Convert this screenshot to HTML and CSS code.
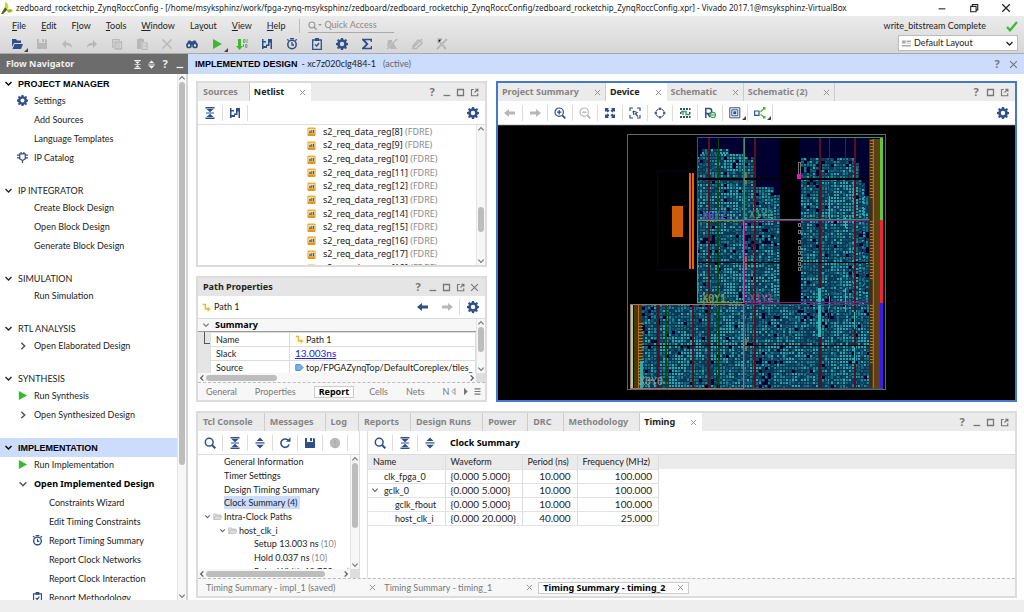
FILE: index.html
```html
<!DOCTYPE html>
<html lang="en">
<head>
<meta charset="utf-8">
<meta name="viewport" content="width=device-width, initial-scale=1">
<title>zedboard_rocketchip_ZynqRoccConfig - Vivado 2017.1</title>
<link rel="stylesheet" href="styles.css">
</head>
<body>
<svg class="sprite" aria-hidden="true">
  <symbol id="gear" viewBox="0 0 12 12"><path fill="currentColor" fill-rule="evenodd" d="M5 0h2l.4 1.6 1 .4L9.800 1.100l1.200 1.200L10.100 3.700l.4 1 1.500.4v2l-1.500.4-.4 1 .8 1.400-1.300 1.200L8.400 10.200l-1 .4L7 12H5l-.4-1.400-1-.4-1.400.9L1 9.900l.9-1.400-.4-1L0 7V5l1.500-.3.4-1L1 2.200 2.300 1l1.300.9 1-.4zM6 3.800a2.200 2.200 0 1 0 0 4.400 2.200 2.200 0 0 0 0-4.400z"/></symbol>
  <symbol id="open" viewBox="0 0 12 12"><path fill="currentColor" d="M1 1h4l1 1.500h4V5H3L1 9zM3.500 6H12l-2 5H1.500z"/></symbol>
  <symbol id="save" viewBox="0 0 12 12"><path fill="currentColor" d="M1 1h2v4h6V1h1l1 1v9H1zM6 1h2v3H6z"/></symbol>
  <symbol id="undo" viewBox="0 0 12 12"><path fill="currentColor" d="M1 6l4-4v2.700c4 0 6 1.500 6 5-1.500-2-3-2.400-6-2.400V10z"/></symbol>
  <symbol id="redo" viewBox="0 0 12 12"><path fill="currentColor" d="M11 6L7 2v2.700c-4 0-6 1.500-6 5 1.500-2 3-2.400 6-2.400V10z"/></symbol>
  <symbol id="copy" viewBox="0 0 12 12"><path fill="none" stroke="currentColor" stroke-width="1.300" d="M3 9H1.700V1.700H8V3M4 4h6.500v7H4z"/><path stroke="currentColor" d="M5 6h4M5 8h4M5 10h4"/></symbol>
  <symbol id="paste" viewBox="0 0 12 12"><path fill="currentColor" d="M1 1h2.500V0h2v1H8v3H5v7H1z"/><path fill="none" stroke="currentColor" stroke-width="1.200" d="M6 5h5v6.300H6zM7 8h3"/></symbol>
  <symbol id="cross" viewBox="0 0 12 12"><path fill="none" stroke="currentColor" stroke-width="1.500" d="M1.500 1.500l9 9M10.500 1.500l-9 9"/></symbol>
  <symbol id="find" viewBox="0 0 12 12"><path fill="currentColor" d="M2.500 2.500h2l1 1h1l1-1h2L12 7H0z"/><circle cx="3" cy="7.500" r="2" fill="#eee" stroke="currentColor" stroke-width="1.700"/><circle cx="9" cy="7.500" r="2" fill="#eee" stroke="currentColor" stroke-width="1.700"/></symbol>
  <symbol id="play" viewBox="0 0 12 12"><path fill="#3db92d" d="M2 1l9 5-9 5z"/></symbol>
  <symbol id="bits" viewBox="0 0 12 12"><path fill="#3db92d" d="M2 1h3v7h2l-3.500 4L0 8h2z"/><path fill="none" stroke="#77a777" d="M7.500 1.500h1.500v3H7.500zM11 1v4M7.500 6v3M9.500 6.500H11v3H9.500z"/></symbol>
  <symbol id="schem" viewBox="0 0 12 12"><path fill="currentColor" d="M1 1h1.500v2H5v1.500H2.500V8H5V6.500h2V1h4v10H9.500V4.500h-1V8H6v2H2.500v1H1z"/></symbol>
  <symbol id="timer" viewBox="0 0 12 12"><circle cx="6" cy="6.500" r="4.200" fill="none" stroke="currentColor" stroke-width="1.500"/><path fill="none" stroke="currentColor" stroke-width="1.300" d="M4 .7h4M6 4v3h2M1 1.500l2 1M11 1.500l-2 1"/></symbol>
  <symbol id="clip" viewBox="0 0 12 12"><path fill="none" stroke="currentColor" stroke-width="1.300" d="M1.700 2h8.600v9.300H1.700zM4 6.500L5.700 8 8 5"/><path fill="currentColor" d="M4 0h4v3H4z"/></symbol>
  <symbol id="sigma" viewBox="0 0 12 12"><path fill="currentColor" d="M1 .7h10v3H9.700l-.5-1.500H4.200L7.500 6l-3.500 3.700h5.500l.5-1.600H11v3.200H1V10l4-4-4-4z"/></symbol>
  <symbol id="unmark" viewBox="0 0 12 12"><path fill="currentColor" d="M2 2h4v2l2-1v3l3 5H5L1 9z"/><path stroke="#e4e4e4" stroke-width="1" d="M11 0L1 10"/><path stroke="currentColor" stroke-width="1.500" d="M11 1L1 11"/></symbol>
  <symbol id="clipx" viewBox="0 0 12 12"><path fill="none" stroke="currentColor" stroke-width="1.500" d="M2 8l5-6 3 1 1 2-6 6-3-1zM1 11L11 1M4 8l4-4"/></symbol>
  <symbol id="delx" viewBox="0 0 12 12"><path fill="none" stroke="currentColor" stroke-width="2" d="M2 2l8 9M11 1L1 11"/><path stroke="currentColor" stroke-width="1.500" d="M2 5V1h4"/></symbol>
  <symbol id="search" viewBox="0 0 12 12"><circle cx="5.200" cy="5.200" r="3.900" fill="none" stroke="currentColor" stroke-width="1.500"/><path stroke="currentColor" stroke-width="2" d="M8 8l3.300 3.300"/></symbol>
  <symbol id="collapse" viewBox="0 0 12 12"><path fill="currentColor" d="M1.500 0h9v1.400h-9zM1.500 10.600h9V12h-9zM2.500 2h7L6 5.200zM2.500 10h7L6 6.800z"/><path stroke="currentColor" d="M2 6h8"/></symbol>
  <symbol id="expand" viewBox="0 0 12 12"><path fill="currentColor" d="M6 .5L9.500 4h-7zM6 11.500L9.500 8h-7zM1.500 5h9v.8h-9zM1.500 6.400h9v.8h-9z"/></symbol>
  <symbol id="reload" viewBox="0 0 12 12"><path fill="none" stroke="currentColor" stroke-width="1.600" d="M9 3.100A4.200 4.200 0 1 0 10.100 7.500"/><path fill="currentColor" d="M7 4.800h4.500V.3z"/></symbol>
  <symbol id="dot" viewBox="0 0 12 12"><circle cx="6" cy="6" r="5.200" fill="#b9b9b9"/><path stroke="#aaa" stroke-width="1.500" d="M6 3v4M6 8v1.500"/></symbol>
  <symbol id="left" viewBox="0 0 12 12"><path fill="currentColor" d="M0 6l5-4v2.400h6v3.200H5V10z"/></symbol>
  <symbol id="right" viewBox="0 0 12 12"><path fill="currentColor" d="M12 6L7 2v2.400H1v3.200h6V10z"/></symbol>
  <symbol id="zin" viewBox="0 0 12 12"><circle cx="5.200" cy="5.200" r="4.200" fill="none" stroke="currentColor" stroke-width="1.200"/><path stroke="currentColor" stroke-width="1.800" d="M8.300 8.300l3 3"/><path stroke="currentColor" stroke-width="1.300" d="M3 5.200h4.400M5.200 3v4.400"/></symbol>
  <symbol id="zout" viewBox="0 0 12 12"><circle cx="5.200" cy="5.200" r="4.200" fill="none" stroke="currentColor" stroke-width="1.200"/><path stroke="currentColor" stroke-width="1.800" d="M8.300 8.300l3 3"/><path stroke="currentColor" stroke-width="1.300" d="M3 5.200h4.400"/></symbol>
  <symbol id="fit" viewBox="0 0 12 12"><path fill="currentColor" d="M1 1h4L3.900 2.100l1.600 1.600-1.800 1.800-1.600-1.600L1 5zM11 1v4L9.900 3.900 8.300 5.500 6.500 3.700l1.600-1.600L7 1zM1 11V7l1.100 1.100 1.600-1.600 1.800 1.800-1.600 1.600L5 11zM11 11H7l1.100-1.100-1.600-1.600 1.800-1.800 1.600 1.600L11 7z"/></symbol>
  <symbol id="zsel" viewBox="0 0 12 12"><path fill="none" stroke="currentColor" stroke-width="1.200" d="M1 4V1h3M8 1h3v3M11 8v3H8M4 11H1V8M4 4l4 1.500L6.500 7 9 9.500M4 4l1 4"/></symbol>
  <symbol id="target" viewBox="0 0 12 12"><circle cx="6" cy="6" r="4.200" fill="none" stroke="currentColor" stroke-width="1"/><path stroke="currentColor" stroke-width="1.500" d="M6 .5v2.500M6 9v2.500M.5 6h2.500M9 6h2.500"/></symbol>
  <symbol id="route" viewBox="0 0 12 12"><path fill="currentColor" d="M1 1h2v2H1zM4 1h2v2H4zM7 1h2v2H7zM10 1h1.500v2H10zM1 9h2v2H1zM4 9h2v2H4zM7 9h2v2H7zM10 9h1.500v2H10zM10 5h1.500v2H10zM1 5h1.500v2H1z"/><path fill="none" stroke="#3da04a" stroke-width="1.400" d="M2 4.500h5v3h4M4 8V5"/></symbol>
  <symbol id="pplus" viewBox="0 0 12 12"><path fill="none" stroke="currentColor" stroke-width="1.500" d="M1.800 11V1.500h3.400a2.500 2.500 0 0 1 0 5H2M4 7l2 3"/><circle cx="8.800" cy="8" r="2.700" fill="none" stroke="#3da04a" stroke-width="1.200"/><path stroke="#3da04a" stroke-width="1.200" d="M7 8h3.600"/></symbol>
  <symbol id="layers" viewBox="0 0 12 12"><path fill="none" stroke="currentColor" d="M.8.800h10v10H.800zM2.800 2.800h6v6h-6z"/><path fill="currentColor" d="M4.300 4.300h3v3h-3z"/></symbol>
  <symbol id="conn" viewBox="0 0 12 12"><path fill="none" stroke="currentColor" stroke-width="1.200" d="M.7 4h4.300v4.300H.700z"/><path fill="#3db92d" d="M9 0h2.500v2.500H9zM9 9h2.500v2.500H9z"/><path fill="none" stroke="#3db92d" stroke-width="1.200" d="M6.500 5L10 1.500M6.500 7.500L10 10"/></symbol>
  <symbol id="ip" viewBox="0 0 12 12"><path fill="none" stroke="currentColor" stroke-width="1.300" d="M3 2h6v5.500L6.500 9h-1L3 7.500zM0 3.500h3M0 6.500h3M9 3.500h3M9 6.500h3M6 9v3M4.500 0v2M7.500 0v2"/></symbol>
  <symbol id="down" viewBox="0 0 12 12"><path fill="none" stroke="currentColor" stroke-width="1.800" d="M2 4l4 4 4-4"/></symbol>
  <symbol id="up" viewBox="0 0 12 12"><path fill="none" stroke="currentColor" stroke-width="1.800" d="M2 8l4-4 4 4"/></symbol>
  <symbol id="next" viewBox="0 0 12 12"><path fill="none" stroke="currentColor" stroke-width="1.800" d="M4 2l4 4-4 4"/></symbol>
  <symbol id="prev" viewBox="0 0 12 12"><path fill="none" stroke="currentColor" stroke-width="1.800" d="M8 2L4 6l4 4"/></symbol>
  <symbol id="min" viewBox="0 0 12 12"><path stroke="currentColor" stroke-width="1.700" d="M2 10h9"/></symbol>
  <symbol id="dash" viewBox="0 0 12 12"><path stroke="currentColor" stroke-width="1.300" d="M2 7h8"/></symbol>
  <symbol id="max" viewBox="0 0 12 12"><path fill="none" stroke="currentColor" stroke-width="1.700" d="M2 2h8v8H2z"/></symbol>
  <symbol id="pop" viewBox="0 0 12 12"><path fill="none" stroke="currentColor" stroke-width="1.500" d="M5 2H2v8.300h8.300V7M6 6l4-4M7 1.700h3.500V5"/></symbol>
  <symbol id="cell" viewBox="0 0 12 12"><rect x=".5" y=".5" width="11" height="11" rx="1.500" fill="#f5ae2b"/><path fill="#fff0c8" d="M2 3h8v5H2z"/><path fill="#35599a" d="M3 5h2v3H3zM5.500 4h1v4h-1zM7.500 4h2v4h-2z"/><path fill="#d07d10" d="M1 10h10v1.500H1z"/></symbol>
  <symbol id="path" viewBox="0 0 12 12"><path fill="none" stroke="#e9b92a" stroke-width="2" d="M1 2h3.500v6H8"/><path fill="#e9b92a" d="M7.500 5L11.500 8l-4 3.500z"/></symbol>
  <symbol id="port" viewBox="0 0 12 12"><path fill="#78b0ee" stroke="#3a74bd" d="M1 2h6l4 4-4 4H1z"/></symbol>
  <symbol id="folder" viewBox="0 0 12 12"><path fill="#dedede" stroke="#b8b8b8" d="M1 10V2.500h3.500l1 1.500H10v2M1 10l2-4.500h9L10 10z"/></symbol>
  <symbol id="list" viewBox="0 0 12 12"><path stroke="currentColor" stroke-width="1.500" d="M2 2.500h8M2 6h8M2 9.500h8"/></symbol>
  <symbol id="stepl" viewBox="0 0 12 12"><path fill="none" stroke="currentColor" d="M8 2v8L4 6z"/></symbol>
  <symbol id="stepr" viewBox="0 0 12 12"><path fill="currentColor" d="M4 1v10l5-5z"/></symbol>
  <symbol id="tick" viewBox="0 0 12 12"><path fill="none" stroke="#3db92d" stroke-width="2.200" d="M1 7l3 3.300L11 2"/></symbol>
  <symbol id="restore" viewBox="0 0 12 12"><path fill="none" stroke="currentColor" stroke-width="1.300" d="M2 4h6.500v6.500H2zM4 4V1.700h6.500v6.500h-2"/></symbol>
</svg>

<header class="titlebar">
  <svg class="logo" viewBox="0 0 12 12" aria-hidden="true"><path fill="#c8d62e" d="M4 0c3 1 4 4 3 7L4 5z"/><path fill="#5a6418" d="M4 5l2.500 2.500L2 12H0z"/><path fill="#a3b520" d="M5 8l5-1 2 2-4 2z"/></svg>
  <h1>zedboard_rocketchip_ZynqRoccConfig - [/home/msyksphinz/work/fpga-zynq-msyksphinz/zedboard/zedboard_rocketchip_ZynqRoccConfig/zedboard_rocketchip_ZynqRoccConfig.xpr] - Vivado 2017.1@msyksphinz-VirtualBox</h1>
  <div class="winbtns">
    <button aria-label="Minimize"><svg class="i"><use href="#dash"/></svg></button>
    <button aria-label="Restore"><svg class="i"><use href="#restore"/></svg></button>
    <button aria-label="Close"><svg class="i"><use href="#cross"/></svg></button>
  </div>
</header>

<div class="ribbon">
  <div class="ribbon-left">
    <div class="menurow">
      <nav class="menu" aria-label="Main menu">
        <button><u>F</u>ile</button><button><u>E</u>dit</button><button>F<u>l</u>ow</button><button><u>T</u>ools</button><button><u>W</u>indow</button><button>La<u>y</u>out</button><button><u>V</u>iew</button><button><u>H</u>elp</button>
      </nav>
      <label class="quick"><svg class="i"><use href="#search"/></svg><span class="caret"></span><input type="text" placeholder="Quick Access" aria-label="Quick Access"></label>
    </div>
    <div class="tools maintools">
      <button class="drop" aria-label="Open project"><svg class="i"><use href="#open"/></svg></button>
      <button disabled aria-label="Save"><svg class="i"><use href="#save"/></svg></button>
      <button disabled aria-label="Undo"><svg class="i"><use href="#undo"/></svg></button>
      <button disabled aria-label="Redo"><svg class="i"><use href="#redo"/></svg></button>
      <button disabled aria-label="Copy"><svg class="i"><use href="#copy"/></svg></button>
      <button disabled aria-label="Paste"><svg class="i"><use href="#paste"/></svg></button>
      <button disabled aria-label="Delete"><svg class="i"><use href="#cross"/></svg></button>
      <button aria-label="Find"><svg class="i"><use href="#find"/></svg></button>
      <button class="drop" aria-label="Run"><svg class="i"><use href="#play"/></svg></button>
      <button aria-label="Generate bitstream"><svg class="i"><use href="#bits"/></svg></button>
      <button aria-label="Schematic"><svg class="i"><use href="#schem"/></svg></button>
      <button aria-label="Report timing"><svg class="i"><use href="#timer"/></svg></button>
      <button aria-label="Report methodology"><svg class="i"><use href="#clip"/></svg></button>
      <button aria-label="Settings"><svg class="i"><use href="#gear"/></svg></button>
      <button aria-label="Project summary"><svg class="i"><use href="#sigma"/></svg></button>
      <button disabled aria-label="Unmark"><svg class="i"><use href="#unmark"/></svg></button>
      <button disabled aria-label="Unhighlight"><svg class="i"><use href="#clipx"/></svg></button>
      <button disabled aria-label="Clear selection"><svg class="i"><use href="#delx"/></svg></button>
    </div>
  </div>
  <div class="ribbon-right">
    <div class="state">write_bitstream Complete <svg class="i"><use href="#tick"/></svg></div>
    <div class="layoutbox">
      <svg class="i" viewBox="0 0 12 12"><path fill="#aaa" d="M0 2h5v4H0zM6 2h6v2H6zM6 5h6v1H6zM0 8h12v2H0z"/></svg>
      <select aria-label="Layout"><option>Default Layout</option></select>
      <svg class="i"><use href="#down"/></svg>
    </div>
  </div>
</div>

<div class="work">
  <aside class="side">
    <div class="sidehead"><h2>Flow Navigator</h2>
      <div class="winops"><button aria-label="Collapse all"><svg class="i"><use href="#collapse"/></svg></button><button aria-label="Expand all"><svg class="i"><use href="#expand"/></svg></button><button>?</button><button aria-label="Hide"><svg class="i"><use href="#min"/></svg></button></div>
    </div>
    <div class="sidebody">
      <nav class="flow" aria-label="Flow Navigator">
        <section><h3 class="strong"><svg class="i"><use href="#down"/></svg>PROJECT MANAGER</h3>
          <button><span class="slot"><svg class="i"><use href="#gear"/></svg></span>Settings</button>
          <button><span class="slot"></span>Add Sources</button>
          <button><span class="slot"></span>Language Templates</button>
          <button><span class="slot"><svg class="i"><use href="#ip"/></svg></span>IP Catalog</button></section>
        <section><h3><svg class="i"><use href="#down"/></svg>IP INTEGRATOR</h3>
          <button><span class="slot"></span>Create Block Design</button>
          <button><span class="slot"></span>Open Block Design</button>
          <button><span class="slot"></span>Generate Block Design</button></section>
        <section><h3><svg class="i"><use href="#down"/></svg>SIMULATION</h3>
          <button><span class="slot"></span>Run Simulation</button></section>
        <section><h3><svg class="i"><use href="#down"/></svg>RTL ANALYSIS</h3>
          <button><span class="slot chev"><svg class="i"><use href="#next"/></svg></span>Open Elaborated Design</button></section>
        <section><h3><svg class="i"><use href="#down"/></svg>SYNTHESIS</h3>
          <button><span class="slot"><svg class="i"><use href="#play"/></svg></span>Run Synthesis</button>
          <button><span class="slot chev"><svg class="i"><use href="#next"/></svg></span>Open Synthesized Design</button></section>
        <section><h3 class="strong current"><svg class="i"><use href="#down"/></svg>IMPLEMENTATION</h3>
          <button><span class="slot"><svg class="i"><use href="#play"/></svg></span>Run Implementation</button>
          <button class="strong"><span class="slot chev"><svg class="i"><use href="#down"/></svg></span>Open Implemented Design</button>
          <button class="deep"><span class="slot"></span>Constraints Wizard</button>
          <button class="deep"><span class="slot"></span>Edit Timing Constraints</button>
          <button class="deep"><span class="slot"><svg class="i"><use href="#timer"/></svg></span>Report Timing Summary</button>
          <button class="deep"><span class="slot"></span>Report Clock Networks</button>
          <button class="deep"><span class="slot"></span>Report Clock Interaction</button>
          <button class="deep"><span class="slot"><svg class="i"><use href="#clip"/></svg></span>Report Methodology</button></section>
      </nav>
      <div class="vbar"><svg class="i"><use href="#up"/></svg><span class="thumb side-thumb"></span><span class="rest"></span><svg class="i"><use href="#down"/></svg></div>
    </div>
  </aside>

  <main class="main">
    <div class="mainhead"><h2>IMPLEMENTED DESIGN</h2><span>- xc7z020clg484-1</span><em>(active)</em>
      <div class="winops"><button>?</button><button aria-label="Close design"><svg class="i"><use href="#cross"/></svg></button></div>
    </div>
    <div class="panes">
      <div class="upper">
        <div class="leftcol">
          <section class="panel netlist">
            <div class="tabs"><button class="tab">Sources</button><button class="tab on">Netlist <svg class="x"><use href="#cross"/></svg></button>
              <div class="winops"><button>?</button><button aria-label="Minimize"><svg class="i"><use href="#min"/></svg></button><button aria-label="Maximize"><svg class="i"><use href="#max"/></svg></button><button aria-label="Float"><svg class="i"><use href="#pop"/></svg></button></div></div>
            <div class="tools"><button aria-label="Collapse all"><svg class="i"><use href="#collapse"/></svg></button><button aria-label="Schematic"><svg class="i"><use href="#schem"/></svg></button><button class="end" aria-label="Settings"><svg class="i"><use href="#gear"/></svg></button></div>
            <div class="scroller">
              <div class="clip"><ul class="cells">
                <li><svg class="i"><use href="#cell"/></svg>s2_req_data_reg[8] <i>(FDRE)</i></li>
                <li><svg class="i"><use href="#cell"/></svg>s2_req_data_reg[9] <i>(FDRE)</i></li>
                <li><svg class="i"><use href="#cell"/></svg>s2_req_data_reg[10] <i>(FDRE)</i></li>
                <li><svg class="i"><use href="#cell"/></svg>s2_req_data_reg[11] <i>(FDRE)</i></li>
                <li><svg class="i"><use href="#cell"/></svg>s2_req_data_reg[12] <i>(FDRE)</i></li>
                <li><svg class="i"><use href="#cell"/></svg>s2_req_data_reg[13] <i>(FDRE)</i></li>
                <li><svg class="i"><use href="#cell"/></svg>s2_req_data_reg[14] <i>(FDRE)</i></li>
                <li><svg class="i"><use href="#cell"/></svg>s2_req_data_reg[15] <i>(FDRE)</i></li>
                <li><svg class="i"><use href="#cell"/></svg>s2_req_data_reg[16] <i>(FDRE)</i></li>
                <li><svg class="i"><use href="#cell"/></svg>s2_req_data_reg[17] <i>(FDRE)</i></li>
                <li><svg class="i"><use href="#cell"/></svg>s2_req_data_reg[18] <i>(FDRE)</i></li>
              </ul></div>
              <div class="vbar"><svg class="i"><use href="#up"/></svg><span class="before"></span><span class="thumb net-thumb"></span><span class="rest"></span><svg class="i"><use href="#down"/></svg></div>
            </div>
          </section>

          <section class="panel props">
            <div class="tabs plain"><h3>Path Properties</h3>
              <div class="winops"><button>?</button><button aria-label="Minimize"><svg class="i"><use href="#min"/></svg></button><button aria-label="Maximize"><svg class="i"><use href="#max"/></svg></button><button aria-label="Float"><svg class="i"><use href="#pop"/></svg></button><button aria-label="Close"><svg class="i"><use href="#cross"/></svg></button></div></div>
            <div class="tools pathrow"><span class="pathname"><svg class="i"><use href="#path"/></svg>Path 1</span><button class="end" aria-label="Previous"><svg class="i"><use href="#left"/></svg></button><button disabled aria-label="Next"><svg class="i"><use href="#right"/></svg></button><button aria-label="Settings"><svg class="i"><use href="#gear"/></svg></button></div>
            <div class="scroller">
              <div class="clip report">
                <h4><svg class="i"><use href="#down"/></svg>Summary</h4>
                <div class="reportbody"><span class="elbow"></span>
                <table>
                  <tr><th scope="row">Name</th><td><svg class="i"><use href="#path"/></svg>Path 1</td></tr>
                  <tr><th scope="row">Slack</th><td><a href="#slack">13.003ns</a></td></tr>
                  <tr><th scope="row">Source</th><td><svg class="i"><use href="#port"/></svg>top/FPGAZynqTop/DefaultCoreplex/tiles_</td></tr>
                </table></div>
              </div>
              <div class="vbar"><svg class="i"><use href="#up"/></svg><span class="thumb prop-thumb"></span><span class="rest"></span><svg class="i"><use href="#down"/></svg></div>
            </div>
            <div class="hbar"><svg class="i"><use href="#prev"/></svg><span class="thumb h-prop"></span><span class="rest"></span><svg class="i"><use href="#next"/></svg><span class="corner"></span></div>
            <div class="bottabs proptabs"><button>General</button><button>Properties</button><button class="on">Report</button><button>Cells</button><button>Nets</button><button class="cut">N</button>
              <div class="steps"><button aria-label="Scroll left"><svg class="i"><use href="#stepl"/></svg></button><button aria-label="Scroll right"><svg class="i"><use href="#stepr"/></svg></button><button aria-label="All tabs"><svg class="i"><use href="#list"/></svg></button></div></div>
          </section>
        </div>

        <section class="panel device">
          <div class="tabs"><button class="tab">Project Summary <svg class="x"><use href="#cross"/></svg></button><button class="tab on">Device <svg class="x"><use href="#cross"/></svg></button><button class="tab">Schematic <svg class="x"><use href="#cross"/></svg></button><button class="tab">Schematic (2) <svg class="x"><use href="#cross"/></svg></button>
            <div class="winops"><button>?</button><button aria-label="Maximize"><svg class="i"><use href="#max"/></svg></button><button aria-label="Float"><svg class="i"><use href="#pop"/></svg></button></div></div>
          <div class="tools"><button disabled aria-label="Back"><svg class="i"><use href="#left"/></svg></button><button disabled aria-label="Forward"><svg class="i"><use href="#right"/></svg></button><button aria-label="Zoom in"><svg class="i"><use href="#zin"/></svg></button><button disabled aria-label="Zoom out"><svg class="i"><use href="#zout"/></svg></button><button aria-label="Zoom fit"><svg class="i"><use href="#fit"/></svg></button><button aria-label="Zoom selection"><svg class="i"><use href="#zsel"/></svg></button><button aria-label="Auto fit"><svg class="i"><use href="#target"/></svg></button><button aria-label="Routing resources"><svg class="i"><use href="#route"/></svg></button><button aria-label="Draw pblock"><svg class="i"><use href="#pplus"/></svg></button><button class="drop" aria-label="Layers"><svg class="i"><use href="#layers"/></svg></button><button class="drop" aria-label="Cell connections"><svg class="i"><use href="#conn"/></svg></button><button class="end" aria-label="Settings"><svg class="i"><use href="#gear"/></svg></button></div>
          <div class="canvas"><svg id="die" viewBox="498 125 517 275" role="img" aria-label="Device floorplan"></svg></div>
        </section>
      </div>

      <section class="panel timing">
        <div class="tabs"><button class="tab">Tcl Console</button><button class="tab">Messages</button><button class="tab">Log</button><button class="tab">Reports</button><button class="tab">Design Runs</button><button class="tab">Power</button><button class="tab">DRC</button><button class="tab">Methodology</button><button class="tab on">Timing <svg class="x"><use href="#cross"/></svg></button>
          <div class="winops"><button>?</button><button aria-label="Minimize"><svg class="i"><use href="#min"/></svg></button><button aria-label="Maximize"><svg class="i"><use href="#max"/></svg></button><button aria-label="Float"><svg class="i"><use href="#pop"/></svg></button></div></div>
        <div class="split">
          <div class="treepane">
            <div class="tools"><button aria-label="Search"><svg class="i"><use href="#search"/></svg></button><button aria-label="Collapse all"><svg class="i"><use href="#collapse"/></svg></button><button aria-label="Expand all"><svg class="i"><use href="#expand"/></svg></button><button aria-label="Rerun"><svg class="i"><use href="#reload"/></svg></button><button aria-label="Save report"><svg class="i"><use href="#save"/></svg></button><button disabled aria-label="Status"><svg class="i"><use href="#dot"/></svg></button></div>
            <div class="scroller">
              <div class="clip"><ul class="tree">
                <li>General Information</li><li>Timer Settings</li><li>Design Timing Summary</li><li><span class="sel">Clock Summary (4)</span></li>
                <li class="d1"><svg class="i c"><use href="#down"/></svg><svg class="i f"><use href="#folder"/></svg>Intra-Clock Paths</li>
                <li class="d2"><svg class="i c"><use href="#down"/></svg><svg class="i f"><use href="#folder"/></svg>host_clk_i</li>
                <li class="d3">Setup 13.003 ns <i>(10)</i></li><li class="d3">Hold 0.037 ns <i>(10)</i></li><li class="d3">Pulse Width 18.750 ns <i>(30)</i></li>
              </ul></div>
              <div class="vbar"><svg class="i"><use href="#up"/></svg><span class="thumb tree-thumb"></span><span class="rest"></span><svg class="i"><use href="#down"/></svg></div>
            </div>
            <div class="hbar"><svg class="i"><use href="#prev"/></svg><span class="thumb h-tree"></span><span class="rest"></span><svg class="i"><use href="#next"/></svg><span class="corner"></span></div>
          </div>
          <div class="clockpane">
            <div class="tools"><button aria-label="Search"><svg class="i"><use href="#search"/></svg></button><button aria-label="Collapse all"><svg class="i"><use href="#collapse"/></svg></button><button aria-label="Expand all"><svg class="i"><use href="#expand"/></svg></button><h3>Clock Summary</h3></div>
            <div class="tablewrap">
            <table class="clocks">
              <thead><tr><th>Name</th><th>Waveform</th><th>Period (ns)</th><th>Frequency (MHz)</th></tr></thead>
              <tbody>
                <tr><td class="l1">clk_fpga_0</td><td>{0.000 5.000}</td><td>10.000</td><td>100.000</td></tr>
                <tr><td class="l0"><svg class="i"><use href="#down"/></svg>gclk_0</td><td>{0.000 5.000}</td><td>10.000</td><td>100.000</td></tr>
                <tr><td class="l2">gclk_fbout</td><td>{0.000 5.000}</td><td>10.000</td><td>100.000</td></tr>
                <tr><td class="l2">host_clk_i</td><td>{0.000 20.000}</td><td>40.000</td><td>25.000</td></tr>
              </tbody>
            </table></div>
          </div>
        </div>
        <div class="bottabs timetabs"><button>Timing Summary - impl_1 (saved) <svg class="x"><use href="#cross"/></svg></button><button>Timing Summary - timing_1 <svg class="x"><use href="#cross"/></svg></button><button class="on">Timing Summary - timing_2 <svg class="x"><use href="#cross"/></svg></button></div>
      </section>
    </div>
  </main>
</div>
<footer class="statusbar"></footer>
<script src="device.js"></script>
</body>
</html>
```
FILE: styles.css
```css
* { box-sizing: border-box; }
body { margin: 0; height: 100vh; min-height: 560px; display: flex; flex-direction: column; overflow: hidden; background: #fff; color: #222; font: 9px/14px Lato, "Noto Sans", sans-serif; }
h1, h2, h3, h4, ul { margin: 0; padding: 0; font-size: 9px; list-style: none; }
button, input, select { font: inherit; color: inherit; border: 0; background: none; padding: 0; margin: 0; border-radius: 0; }
i, em { font-style: normal; color: #8a8a8a; }
.sprite { display: none; }
.i { width: 12px; height: 12px; flex: none; display: block; }
.x { width: 7px; height: 7px; flex: none; color: #888; }

.titlebar { display: flex; align-items: center; height: 16px; flex: none; padding-left: 1px; gap: 3px; }
.titlebar .logo { width: 12px; height: 12px; flex: none; }
.titlebar h1 { font: 8px/14px "Noto Sans", sans-serif; white-space: nowrap; flex: 1; }
.winbtns { display: flex; gap: 22px; padding-right: 13px; color: #222; }
.winbtns .i { width: 10px; height: 10px; }

.ribbon { display: flex; justify-content: space-between; height: 38px; flex: none; background: linear-gradient(#ebebeb, #d6d6d6); border-bottom: 1px solid #aaa; }
.menurow { display: flex; height: 19px; align-items: center; padding-left: 12px; }
.menu { display: flex; gap: 15px; padding-right: 14px; border-right: 1px solid #bbb; }
.quick { display: flex; align-items: center; margin-left: 8px; border-bottom: 1px solid #aaa; color: #999; }
.quick .i { width: 9px; height: 9px; }
.caret { border: 2px solid transparent; border-top-color: #999; margin: 2px 2px 0 1px; }
.quick input { width: 70px; height: 13px; outline: 0; }
.quick input::placeholder { color: #8a8a8a; }
.maintools { padding-left: 5px; }
.ribbon-right { display: flex; flex-direction: column; align-items: flex-end; padding-right: 6px; }
.state { display: flex; align-items: center; gap: 20px; height: 19px; }
.layoutbox { display: flex; align-items: center; height: 16px; width: 120px; background: #fff; border: 1px solid #bbb; padding: 0 3px; gap: 3px; }
.layoutbox .i { width: 9px; height: 9px; }
.layoutbox select { flex: 1; appearance: none; outline: 0; }

.tools { display: flex; align-items: center; flex: none; }
.tools button { width: 25px; height: 16px; display: flex; align-items: center; justify-content: center; color: #2f4f8a; position: relative; border-right: 1px solid #dcdcdc; }
.tools button:disabled { color: #b8b8b8; }
.tools .end { margin-left: auto; border: 0; }
.maintools button { border-color: transparent; height: 18px; }
.drop::after { content: ""; position: absolute; right: 1px; bottom: 1px; border: 2px solid #444; border-top-color: transparent; border-left-color: transparent; }

.work { flex: 1; display: flex; min-height: 0; }
.side { width: 188px; flex: none; display: flex; flex-direction: column; border-right: 2px solid #d5d5d5; }
.sidehead { display: flex; align-items: center; justify-content: space-between; height: 20px; flex: none; background: #6c6c6c; padding-left: 6px; margin-right: -2px; }
.sidehead h2, .sidehead button { color: #f0f0f0; }
.sidehead h2 { font: bold 9px/14px "Noto Sans", sans-serif; }
.winops { display: flex; align-items: center; margin-left: auto; padding-right: 4px; color: #777; }
.winops button { width: 14px; height: 14px; display: flex; align-items: center; justify-content: center; font: bold 11px/14px "Noto Sans", sans-serif; }
.winops .i { width: 9px; height: 9px; }
.sidehead .winops { padding-right: 2px; }
.sidebody { flex: 1; display: flex; min-height: 0; }
.flow { flex: 1; overflow: hidden; }
.flow section { padding-bottom: 14px; }
.flow h3 { display: flex; align-items: center; height: 19px; margin-bottom: -2px; padding-left: 4px; gap: 5px; font-weight: normal; }
.flow h3 .i { width: 9px; height: 9px; }
.flow .strong { font: bold 9px/14px "Noto Sans", sans-serif; color: #000; }
.flow h3.strong { font-family: "Liberation Sans", sans-serif; }
.flow .current { background: #cbdcfd; }
.flow button { display: flex; align-items: center; height: 19px; width: 100%; padding-left: 17px; white-space: nowrap; }
.flow .deep { padding-left: 32px; }
.slot { width: 17px; flex: none; color: #2f4f8a; }
.slot .i { width: 11px; height: 11px; }
.slot.chev { color: #555; }
.chev .i { width: 10px; height: 10px; margin-left: 1px; }

.vbar { width: 9px; flex: none; display: flex; flex-direction: column; align-items: center; background: #f7f7f7; border-left: 1px solid #e5e5e5; color: #777; }
.vbar .i, .hbar .i { width: 8px; height: 8px; }
.thumb { background: #bdbdbd; border-radius: 3px; width: 6px; }
.rest { flex: 1; }
.side-thumb { flex: 3; }
.before { flex: 6; }
.net-thumb { flex: 2; }
.net-thumb + .rest { flex: 2; }
.prop-thumb, .tree-thumb { flex: 2; }
.tree-thumb + .rest { flex: 1; }
.hbar { height: 9px; flex: none; display: flex; align-items: center; background: #f7f7f7; color: #555; }
.hbar .thumb { height: 6px; }
.h-prop { flex: 3; }
.h-prop + .rest { flex: 8; }
.h-tree { flex: 7; }
.corner { width: 9px; height: 9px; background: #ddd; }

.main { flex: 1; min-width: 0; display: flex; flex-direction: column; }
.mainhead { display: flex; align-items: center; gap: 4px; height: 20px; flex: none; background: #cbdcfd; padding-left: 7px; }
.mainhead h2 { font-family: "Liberation Sans", sans-serif; color: #000; }
.mainhead em { color: #666; margin-left: 3px; }
.mainhead .winops { gap: 2px; padding-right: 4px; }
.panes { flex: 1; min-height: 0; display: flex; flex-direction: column; gap: 9px; padding: 7px 7px 2px 8px; }
.upper { flex: 1; min-height: 0; display: grid; grid-template-columns: 291fr 521fr; gap: 9px; }
.leftcol { display: flex; flex-direction: column; gap: 9px; min-height: 0; min-width: 0; }
.panel { display: flex; flex-direction: column; min-height: 0; min-width: 0; border: 2px solid #dcdcdc; background: #fff; }
.netlist { flex: 1; }
.props { height: 126px; }
.timing { height: 187px; flex: none; }
.device { border-color: #4478cf; }

.tabs { display: flex; align-items: center; height: 18px; flex: none; background: #ebebeb; }
.tab { display: flex; align-items: center; height: 18px; padding: 0 11px 0 5px; font: bold 9px/14px "Noto Sans", sans-serif; color: #858585; border-right: 1px solid #ccc; white-space: nowrap; }
.tab:has(.x) { padding: 0 4px; }
.tab .x { margin-left: 15px; }
.tab.on { background: #fff; color: #222; border-color: #fff; }
.plain { background: #e5e5e5; padding-left: 5px; }
.plain h3, .clockpane h3, .report h4 { font: bold 9px/14px "Noto Sans", sans-serif; color: #222; }
.panel > .tools, .split .tools { height: 24px; border-bottom: 1px solid #ddd; }
.panel > .tools .end, .pathrow button:last-child { border: 0; }
.scroller { flex: 1; min-height: 0; display: flex; }
.clip { flex: 1; min-width: 0; overflow: hidden; }
.cells { height: 107%; display: flex; flex-direction: column; padding-left: 109px; font: 9px/12px "Noto Sans", sans-serif; }
.cells li { flex: 1; display: flex; align-items: center; white-space: pre; color: #222; min-height: 0; }
.cells .i { width: 9px; height: 9px; margin-right: 7px; }

.panel > .pathrow { height: 23px; }
.pathname { display: flex; align-items: center; gap: 3px; padding-left: 4px; }
.pathname .i, .report td .i { width: 9px; height: 9px; }
.report { background: #e5e5e5; }
.report h4 { display: flex; align-items: center; gap: 5px; height: 13px; background: #f7f7f7; padding-left: 4px; color: #000; border-bottom: 1px solid #999; }
.report h4 .i { width: 8px; height: 8px; color: #777; }
.reportbody { display: flex; }
.elbow { width: 6px; height: 12px; margin-left: 6px; border-left: 1px solid #555; border-bottom: 1px solid #555; flex: none; }
.report table { flex: 1; width: 0; table-layout: fixed; border-collapse: collapse; background: #fff; }
.report th, .report td { height: 14px; padding: 0 0 0 5px; font-weight: normal; text-align: left; border: 1px solid #ddd; line-height: 13px; white-space: nowrap; }
.report th { width: 79px; }
.report td .i { display: inline-block; vertical-align: -1px; margin-right: 2px; }
.report a { color: #2222e0; font-size: 10px; }
.bottabs { display: flex; align-items: center; height: 18px; flex: none; background: #f7f7f7; border-top: 1px dashed #bbb; color: #777; }
.bottabs button { display: flex; align-items: center; height: 12px; white-space: nowrap; }
.bottabs .on { background: #fff; border: 1px solid #ccc; color: #000; font: bold 9px/10px "Noto Sans", sans-serif; padding: 0 4px; }
.proptabs { padding: 0 3px 0 8px; }
.proptabs > button { margin-right: 18px; }
.proptabs > .on { margin-right: 15px; }
.proptabs > .cut { margin-right: 0; }
.steps { display: flex; gap: 3px; margin-left: auto; }
.steps .i { width: 9px; height: 9px; }

.canvas { flex: 1; min-height: 0; background: #000; display: flex; }
#die { width: 100%; height: 100%; display: block; }
#die text { font: 10px "DejaVu Sans Mono", monospace; }

.split { flex: 1; min-height: 0; display: flex; gap: 7px; }
.treepane { width: 162px; flex: none; display: flex; flex-direction: column; border-right: 1px solid #ddd; }
.tree { height: 108%; display: flex; flex-direction: column; line-height: 13px; }
.tree li { flex: 1; display: flex; align-items: center; white-space: pre; padding-left: 26px; min-height: 0; }
.tree .d1 { padding-left: 6px; }
.tree .d2 { padding-left: 21px; }
.tree .d3 { padding-left: 56px; }
.tree .c { width: 7px; height: 7px; color: #666; margin-right: 2px; }
.tree .f { width: 9px; height: 9px; margin-right: 2px; }
.sel { background: #cbdcfd; padding-right: 2px; }
.clockpane { flex: 1; min-width: 0; display: flex; flex-direction: column; border-left: 1px solid #ddd; }
.clockpane h3 { margin-left: 7px; color: #000; }
.clockpane .tools button:nth-child(3) { border-color: transparent; }
.tablewrap { background: linear-gradient(#ebebeb 14px, #fff 14px); flex: 1; }
.clocks { width: 291px; table-layout: fixed; border-collapse: collapse; }
.clocks th, .clocks td { height: 14px; padding: 0 6px 0 5px; line-height: 13px; font-weight: normal; border-right: 1px solid #ddd; border-bottom: 1px solid #e3e3e3; text-align: right; white-space: nowrap; }
.clocks th { text-align: left; background: #ebebeb; }
.clocks th:nth-child(1), .clocks th:nth-child(2) { width: 77px; }
.clocks th:nth-child(3) { width: 55px; padding-right: 0; }
.clocks td:nth-child(-n+2) { text-align: left; }
.clocks td:nth-child(n+2) { font-size: 10px; }
.clocks .l1 { padding-left: 16px; }
.clocks .l0 { padding-left: 3px; }
.clocks .l0 .i { display: inline-block; width: 8px; height: 8px; margin-right: 5px; color: #666; }
.clocks .l2 { padding-left: 27px; }
.timetabs button { padding-left: 8px; }
.timetabs .x { margin-left: 34px; }
.timetabs .on .x { margin-left: 12px; }
.timetabs .on { margin-left: 5px; padding-left: 4px; }

.statusbar { height: 12px; flex: none; background: #eee; }
```
FILE: device.js
```js
(function () {
  var NS = "http://www.w3.org/2000/svg";
  var die = document.getElementById("die");
  var seed = 7;
  function rnd() { seed = (seed * 16807) % 2147483647; return seed / 2147483647; }
  function add(name, attrs, text) {
    var el = document.createElementNS(NS, name);
    for (var k in attrs) el.setAttribute(k, attrs[k]);
    if (text) el.textContent = text;
    die.appendChild(el);
  }
  function box(x, y, w, h, fill) { add("rect", { x: x, y: y, width: w, height: h, fill: fill }); }
  function frame(x, y, w, h, stroke) { add("rect", { x: x + 0.5, y: y + 0.5, width: w, height: h, fill: "none", stroke: stroke }); }

  // Outer die edge and processor block
  box(498, 125, 517, 1, "#333");
  frame(627, 134, 258, 255, "#666");
  frame(657, 171, 39, 98, "#050520");
  box(672, 206, 11, 31, "#cf5c0b");
  box(689, 173, 2, 96, "#e8650a");
  box(692, 173, 2, 96, "#e8650a");

  // Fabric background
  box(697, 138, 83, 166, "#000030");
  box(800, 138, 69, 166, "#000030");
  box(642, 304, 227, 84, "#000030");

  // Used logic: [x, y, width, height]
  var used = [
    [697, 154, 46, 150], [702, 149, 26, 5], [745, 157, 8, 147], [753, 187, 21, 117], [774, 195, 5, 109],
    [801, 158, 52, 146], [853, 163, 6, 141], [859, 180, 4, 124], [863, 196, 6, 108], [642, 304, 227, 84]
  ];
  var shades = ["#146a80", "#1b858f", "#2ca8ac", "#105270", "#0b3c5c"];
  var paths = shades.map(function () { return ""; });
  var base = "";
  used.forEach(function (r) {
    for (var y = r[1]; y < r[1] + r[3]; y += 3) {
      for (var x = r[0]; x < r[0] + r[2]; x += 3) {
        var wave = Math.sin(x / 9 + 2) + Math.cos(y / 11) + Math.sin((x + y) / 23);
        if (rnd() < 0.03 + (wave < -1.6 ? 0.15 : 0)) { continue; }
        base += "M" + x + " " + y + "h3v3h-3z";
        var pick = Math.min(4, Math.floor(rnd() * 5));
        if (wave > 0.8 && rnd() < 0.45) pick = 2;
        paths[pick] += "M" + x + " " + y + "h2v2h-2z";
        if (rnd() < 0.3) paths[3] += "M" + (x + 2) + " " + y + "h1v2h-1z";
        if (rnd() < 0.25) paths[0] += "M" + x + " " + (y + 2) + "h2v1h-2z";
      }
    }
  });
  add("path", { d: base, fill: "#093752" });
  paths.forEach(function (d, i) { add("path", { d: d, fill: shades[i] }); });

  // Block memory and DSP columns
  [[708, 138, 250], [754, 138, 250], [819, 138, 250], [854, 138, 250], [657, 304, 84], [692, 304, 84]].forEach(function (c) {
    box(c[0], c[1], 2, c[2], "#5a0f1c");
  });
  [[718, 138, 250], [829, 138, 250], [845, 138, 250], [666, 304, 84], [683, 304, 84]].forEach(function (c) {
    box(c[0], c[1], 1, c[2], "#06470f");
  });
  [[818, 288, 3, 49], [829, 196, 1, 26], [845, 217, 1, 11], [845, 288, 1, 24], [829, 296, 1, 12], [854, 312, 1, 17], [854, 347, 1, 16]].forEach(function (c) {
    box(c[0], c[1], c[2], c[3], "#35b5b7");
  });
  [172, 256, 339].forEach(function (y) { box(744, y, 3, 12, "#8a7040"); });

  // Clock rows
  box(697, 178, 172, 2, "#000");
  box(697, 262, 172, 1, "#000");
  box(634, 345, 235, 1, "#000");
  box(780, 139, 20, 165, "#000");
  frame(798, 162, 2, 12, "#777");
  box(797, 174, 4, 5, "#f010c0");
  [223, 230, 240, 246, 251, 257, 262, 267].forEach(function (y) { frame(798, y, 2, 3, "#777"); });

  // Clock region outlines
  frame(697, 137, 46, 82, "#45459a");
  frame(744, 137, 138, 82, "#3f9078");
  frame(697, 220, 46, 82, "#86902a");
  frame(744, 220, 138, 82, "#94187e");
  frame(630, 304, 113, 84, "#a86f70");
  frame(744, 304, 138, 84, "#334f70");

  // I/O banks
  box(869, 139, 3, 249, "#4a2a12");
  box(872, 139, 8, 249, "#5d4112");
  box(873, 139, 1, 249, "#b0700f");
  box(634, 305, 8, 83, "#4e3710");
  box(638, 305, 1, 83, "#b0700f");
  for (var y = 140; y < 386; y += 3) {
    if ((y - 138) % 83 < 60) box(870, y, 3, 1, "#b47a20");
    if (y > 320) box(639, y, 4, 1, "#b47a20");
  }
  box(880, 138, 3, 82, "#63c83e");
  box(880, 220, 3, 83, "#f0243a");
  box(880, 303, 3, 85, "#3c18f0");
  box(631, 305, 2, 83, "#8fdc84");
  box(640, 361, 3, 27, "#2fa9aa");

  add("text", { x: 702, y: 219, fill: "#6a66c4" }, "X0Y2");
  add("text", { x: 749, y: 218, fill: "#48a084" }, "X1Y2");
  add("text", { x: 702, y: 302, fill: "#98a232" }, "X0Y1");
  add("text", { x: 749, y: 302, fill: "#b040a0" }, "X1Y1");
  add("text", { x: 639, y: 385, fill: "#93a0a0" }, "X0Y0");
})();
```
